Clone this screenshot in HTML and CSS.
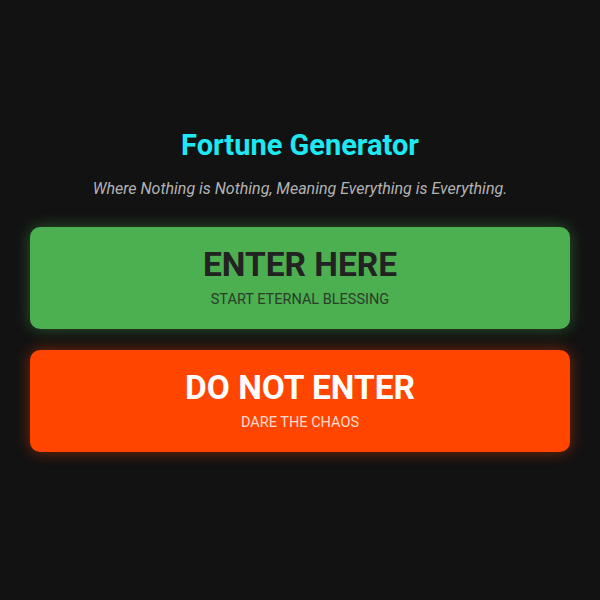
FILE: index.html
```html
<!DOCTYPE html>
<html>
<head>
<meta charset="utf-8">
<link rel="stylesheet" href="styles.css">
</head>
<body>
<main class="page">
  <h1 class="title">Fortune Generator</h1>
  <p class="tagline">Where Nothing is Nothing, Meaning Everything is Everything.</p>
  <div class="choices">
    <button class="choice choice-bless">
      <span class="choice-main">ENTER HERE</span>
      <span class="choice-sub">START ETERNAL BLESSING</span>
    </button>
    <button class="choice choice-chaos">
      <span class="choice-main">DO NOT ENTER</span>
      <span class="choice-sub">DARE THE CHAOS</span>
    </button>
  </div>
</main>
</body>
</html>
```
FILE: styles.css
```css
* { box-sizing: border-box; }
html, body {
  margin: 0;
  padding: 0;
  background: #121212;
  height: 100%;
}
body {
  font-family: Roboto, "Liberation Sans", sans-serif;
  color: #ddd;
}
.page {
  display: flex;
  flex-direction: column;
  align-items: center;
  padding: 127px 30px 0;
}
.title {
  margin: 0;
  font-size: 29px;
  font-weight: 700;
  color: #1ee8f2;
  line-height: 36px;
}
.tagline {
  margin: 16px 0 0;
  font-size: 16px;
  font-style: italic;
  color: #b3b3b3;
  line-height: 20px;
}
.choices {
  margin-top: 28px;
  width: 100%;
  display: flex;
  flex-direction: column;
  gap: 21px;
}
.choice {
  border: none;
  border-radius: 10px;
  height: 102px;
  width: 100%;
  display: flex;
  flex-direction: column;
  align-items: center;
  justify-content: center;
  font-family: inherit;
  padding: 0 0 3px;
  cursor: pointer;
}
.choice-main {
  font-size: 33.5px;
  font-weight: 700;
  line-height: 40px;
}
.choice-sub {
  margin-top: 7px;
  font-size: 14.5px;
  line-height: 16px;
  opacity: 0.8;
}
.choice-bless {
  background: #4caf50;
  color: #222;
  box-shadow: 0 0 15px rgba(76, 175, 80, 0.45);
}
.choice-chaos {
  background: #ff4500;
  color: #fff;
  box-shadow: 0 0 15px rgba(255, 69, 0, 0.45);
}
```
